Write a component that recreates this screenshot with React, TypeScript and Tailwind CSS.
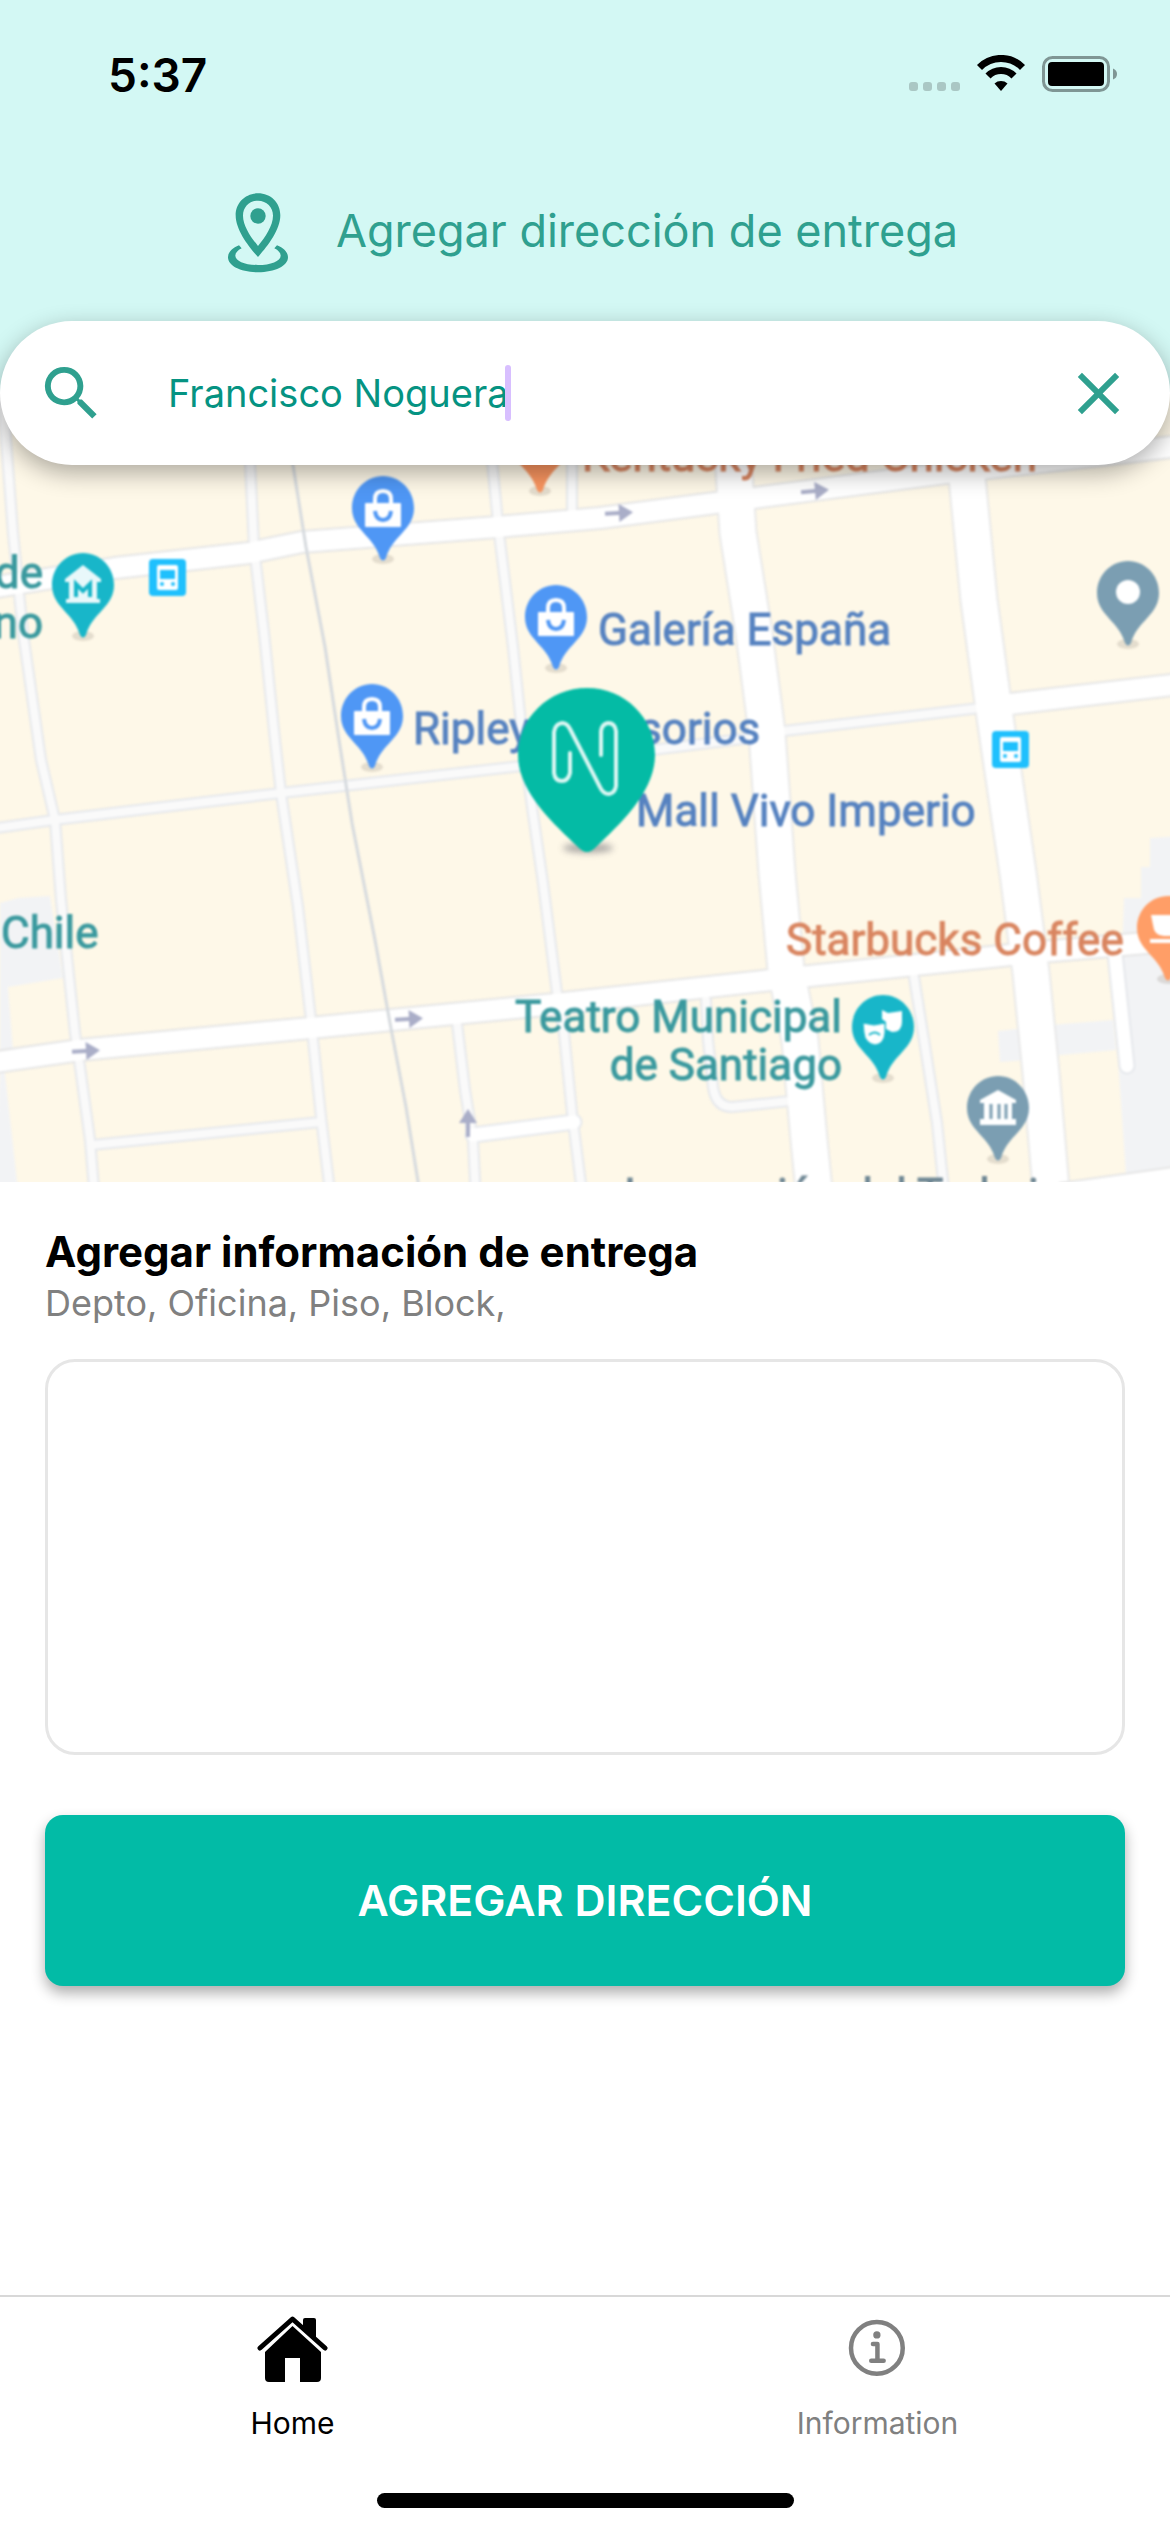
import { useState } from "react";
import type { ReactNode } from "react";
import { IoInformationCircleOutline } from "react-icons/io5";
import { MdClose, MdSearch } from "react-icons/md";

function StatusBar() {
  return (
    <div className="flex h-[150px] items-center justify-between pr-[50px] pl-[108px]">
      <span className="text-[46px] leading-none font-semibold text-black">5:37</span>
      <svg viewBox="0 0 212 40" className="h-10 w-[212px]" aria-hidden="true">
        {[0, 14, 28, 42].map((x) => (
          <rect key={x} x={x + 1} y="27" width="9" height="9" rx="3" fill="#aac7c4" />
        ))}
        <g fill="none" stroke="#000" strokeWidth="7">
          <path d="M71.500 12.500 A30 30 0 0 1 114.500 12.500" />
          <path d="M80 21 A18 18 0 0 1 106 21" />
        </g>
        <path d="M86.500 28.500 A10 10 0 0 1 99.500 28.500 L93 36 Z" fill="#000" />
        <rect x="135.500" y="2.500" width="65" height="33" rx="9" fill="none" stroke="#7f9694" strokeWidth="3" />
        <rect x="140" y="7" width="56" height="24" rx="4" fill="#000" />
        <path d="M205 13.500 Q209 15 209 19 Q209 23 205 24.500 Z" fill="#7f9694" />
      </svg>
    </div>
  );
}

function LocationIcon() {
  return (
    <svg viewBox="84 70 180 240" className="h-20 w-[60px]" fill="#2fa08f" aria-hidden="true">
      <path
        fillRule="evenodd"
        d="M174 71 C136 71 107 99 107 137 C107 182 147 232 174 262 C201 232 241 182 241 137 C241 99 212 71 174 71 Z M174 93 C200 93 219 112 219 138 C219 168 196 202 174 229 C152 202 129 168 129 138 C129 112 148 93 174 93 Z"
      />
      <circle cx="174" cy="139" r="23" />
      <path d="M117 227 C97 235 84 248 84 263 C84 289 123 308 174 308 C225 308 264 289 264 263 C264 248 251 235 231 227 L223 236 C235 242 242 250 242 258 C242 274 212 286 174 286 C136 286 106 274 106 258 C106 250 113 242 125 236 Z" />
    </svg>
  );
}

function HomeIcon() {
  return (
    <svg viewBox="0 -3 72 72" className="size-[72px]" aria-hidden="true">
      <path
        d="M35.500 10 L64 36 V62 Q64 66 60 66 H43 V42 H28 V66 H12 Q8 66 8 62 V36 Z"
        fill="#000"
      />
      <path d="M46 4 Q46 2 48 2 H57 Q59 2 59 4 V23 L46 11 Z" fill="#000" />
      <path
        d="M3 32 L35.500 3 L68 32"
        fill="none"
        stroke="#000"
        strokeWidth="5"
        strokeLinecap="round"
        strokeLinejoin="round"
      />
    </svg>
  );
}

function Pin({ x, y, color, children }: { x: number; y: number; color: string; children?: ReactNode }) {
  return (
    <g transform={`translate(${x} ${y})`}>
      <ellipse cx="0" cy="83" rx="11" ry="5" fill="#8a7f70" opacity="0.22" />
      <path d="M0 0 C-17 0 -31 14 -31 32 C-31 54 -9 60 -3 82 Q0 87 3 82 C9 60 31 54 31 32 C31 14 17 0 0 0 Z" fill={color} />
      {children}
    </g>
  );
}

function Bag() {
  return (
    <g>
      <rect x="-18" y="27" width="36" height="24" rx="1" fill="#fff" />
      <path d="M-8 28 V23 Q-8 15 0 15 Q8 15 8 23 V28" fill="none" stroke="#fff" strokeWidth="4" />
      <path d="M-8 35 Q-7 44 0 44 Q7 44 8 35" fill="none" stroke="#4f97f5" strokeWidth="4" />
    </g>
  );
}

function Transit({ x, y }: { x: number; y: number }) {
  return (
    <g transform={`translate(${x} ${y})`}>
      <rect width="37" height="37" rx="4" fill="#1fc0fd" />
      <rect x="8" y="6" width="21" height="25" rx="2" fill="#fff" />
      <rect x="11" y="11" width="15" height="9" fill="#1fc0fd" />
      <circle cx="13" cy="25" r="2" fill="#1fc0fd" />
      <circle cx="24" cy="25" r="2" fill="#1fc0fd" />
    </g>
  );
}

const minorRoads = [
  "M3 380 L6 440 L13 533 L23 633 L41 760 L55 820 L61 900 L75 1033 L80 1067 L90 1140 L95 1200",
  "M246 380 L249 440 L254 547 L264 633 L275 740 L281 793 L298 907 L311 1020 L321 1117 L331 1200",
  "M485 380 L490 440 L499 533 L513 647 L522 733 L532 807 L543 883 L557 993 L564 1033 L572 1113 L583 1200",
  "M572 380 L572 512",
  "M-10 829 L54 820 L281 793 L513 767 L750 738 L784 731 L980 708",
  "M92 1145 L321 1122",
  "M457 1023 L465 1090 L473 1140 L476 1200",
  "M706 1000 L708 1040 L713 1087 Q716 1107 732 1107 L790 1101",
  "M914 977 L924 1040 L937 1123 L945 1200",
];

const mediumRoads = ["M473 1135 L574 1122", "M1115 953 L1127 1066"];

const mainRoads = [
  "M-10 588 L115 568 L249 553 L302 542 L497 527 L600 518 L715 503 L953 472 L1180 446",
  "M-10 1063 L80 1050 L310 1028 L555 1004 L790 978 L1029 953 L1180 940",
  "M1010 704 L1180 684",
];

const avenues = [
  "M728 380 L732 440 L738 533 L754 633 L767 733 L777 873 L786 970 L800 1040 L809 1140 L815 1200",
  "M960 380 L966 467 L979 600 L995 717 L1018 873 L1031 973 L1041 1073 L1052 1200",
];

function Roads({ paths, color, width }: { paths: string[]; color: string; width: number }) {
  return (
    <g fill="none" strokeLinecap="round" strokeLinejoin="round">
      {paths.map((d) => (
        <path key={d} d={d} stroke={color} strokeWidth={width} />
      ))}
    </g>
  );
}

function Arrow({ x, y, angle }: { x: number; y: number; angle: number }) {
  return (
    <path
      transform={`translate(${x} ${y}) rotate(${angle})`}
      d="M-14 -2 H0 V-9 L14 0 L0 9 V2 H-14 Z"
      fill="#aaaec8"
    />
  );
}

function MapView() {
  return (
    <svg
      viewBox="0 392 1170 790"
      preserveAspectRatio="xMidYMid slice"
      className="block h-[790px] w-full bg-[#fef8e8]"
      role="img"
      aria-label="Mapa"
    >
      <g className="blur-[1px]">
        <g fill="#f2f3f5">
          <path d="M0 903 L18 898 L50 896 L63 978 L8 987 L13 1050 H0 Z" />
          <path d="M0 1070 L5 1074 L18 1190 H-5 Z" />
          <path d="M1150 838 L1180 836 V1190 H1127 L1118 1060 L1124 898 H1141 V867 H1150 Z" />
          <path d="M998 1031 L1025 1028 L1028 1060 L1000 1062 Z" />
          <path d="M1050 1025 L1113 1020 L1116 1050 L1050 1056 Z" />
        </g>
        <Roads paths={minorRoads} color="#e6e8ec" width={12} />
        <Roads paths={mediumRoads} color="#e6e8ec" width={17} />
        <Roads paths={mainRoads} color="#e6e6e6" width={24} />
        <Roads paths={avenues} color="#e9e9e9" width={39} />
        <Roads paths={minorRoads} color="#fafafa" width={8} />
        <Roads paths={mediumRoads} color="#ffffff" width={13} />
        <Roads paths={mainRoads} color="#ffffff" width={20} />
        <Roads paths={avenues} color="#ffffff" width={35} />
        <path d="M1060 1183 L1180 1166 V1195 H1060 Z" fill="#fff" stroke="#e6e6e6" strokeWidth="2" />
        <path
          d="M280 380 L289 440 L306 547 L325 647 L339 740 L352 823 L375 940 L390 1023 L406 1107 L421 1200"
          fill="none"
          stroke="#d6dade"
          strokeWidth="3"
        />
        <Arrow x={619} y={513} angle={-3} />
        <Arrow x={815} y={491} angle={-5} />
        <Arrow x={86} y={1051} angle={-3} />
        <Arrow x={409} y={1019} angle={-3} />
        <Arrow x={468} y={1123} angle={-90} />

        <g fontFamily="Roboto, sans-serif" fontSize="44" fontWeight="400" strokeWidth="1">
          <g fill="#5682c0" stroke="#5682c0">
            <text x="598" y="645">Galería España</text>
            <text x="413" y="744">Ripley Accesorios</text>
            <text x="636" y="826">Mall Vivo Imperio</text>
          </g>
          <g fill="#d98560" stroke="#d98560">
            <text x="786" y="955">Starbucks Coffee</text>
            <text x="582" y="471">Kentucky Fried Chicken</text>
          </g>
          <g fill="#3a999e" stroke="#3a999e">
            <text x="1" y="948">Chile</text>
            <text x="43" y="588" textAnchor="end">de</text>
            <text x="43" y="638" textAnchor="end">no</text>
            <text x="842" y="1032" textAnchor="end">Teatro Municipal</text>
            <text x="842" y="1080" textAnchor="end">de Santiago</text>
          </g>
          <text x="624" y="1210" fill="#6f8794" stroke="#6f8794">Inspección del Trabajo</text>
        </g>

        <Pin x={540} y={408} color="#fa9560" />
        <Pin x={383} y={476} color="#4f97f5"><Bag /></Pin>
        <Pin x={556} y={585} color="#4f97f5"><Bag /></Pin>
        <Pin x={372} y={684} color="#4f97f5"><Bag /></Pin>
        <Pin x={83} y={553} color="#18b6c9">
          <path d="M-18 26 L0 12 L18 26 V29 H14 V46 H17 V50 H-17 V46 H-14 V29 H-18 Z" fill="#fff" opacity="0.9" />
          <path d="M-7 44 V31 L0 38 L7 31 V44" fill="none" stroke="#18b6c9" strokeWidth="4" />
        </Pin>
        <Pin x={1128} y={561} color="#7b9eb2">
          <circle cx="0" cy="31" r="12" fill="#fff" />
        </Pin>
        <Pin x={1168} y={896} color="#ff9e67">
          <path d="M-17 19 H14 V28 Q14 40 2 40 H-4 Q-14 40 -15 29 Z M-18 43 H16 V47 H-18 Z" fill="#fff" />
        </Pin>
        <Pin x={883} y={995} color="#18b6c9">
          <path d="M-1 15 L5 18 L19 16 V27 Q19 37 9 37 L3 34 V27 L-1 24 Z" fill="#fff" />
          <path d="M-20 28 L-9 30 L2 28 V38 Q1 49 -8 50 Q-18 48 -19 38 Z" fill="#fff" stroke="#18b6c9" strokeWidth="1" />
          <path d="M-14 40 Q-8 35 -3 40" fill="none" stroke="#18b6c9" strokeWidth="2" />
        </Pin>
        <Pin x={998} y={1076} color="#7b9eb2">
          <path d="M-18 24 L0 14 L18 24 V27 H14 V43 H18 V49 H-18 V43 H-14 V27 H-18 Z" fill="#fff" />
          <path d="M-7 28 V43 M1 28 V43 M8 28 V43" stroke="#7b9eb2" strokeWidth="3" />
        </Pin>
        <Transit x={149} y={559} />
        <Transit x={992} y={731} />

        <ellipse cx="588" cy="848" rx="25" ry="5" fill="#5b5b66" opacity="0.5" className="blur-[3px]" />
        <path
          d="M587 688 C549 688 518 718 518 755 C518 792 554 824 578 847 Q587 857 596 847 C620 824 655 792 655 755 C655 718 625 688 587 688 Z"
          fill="#04bba5"
        />
        <path
          d="M570 753 V773 Q568 781 562 781 Q555 781 554 773 V732 Q555 724 562 723 Q567 723 570 729 L600 787 Q603 794 609 794 Q615 793 616 786 V731 Q615 723 608 723 Q602 724 601 731 V755"
          fill="none"
          stroke="#dcf7f3"
          strokeWidth="4"
          strokeLinecap="round"
        />
      </g>
    </svg>
  );
}

function SearchBar() {
  const [query, setQuery] = useState("Francisco Noguera");
  return (
    <div className="relative z-10 -mb-[73px] flex h-36 items-center rounded-full bg-white px-9 shadow-[0_8px_24px_rgba(0,0,0,0.32)]">
      <MdSearch className="size-[71px] text-[#2fa08f]" aria-hidden="true" />
      <div className="flex min-w-0 flex-1 items-center pl-[61px]">
        <input
          type="text"
          aria-label="Buscar dirección"
          value={query}
          onChange={(event) => setQuery(event.target.value)}
          className="field-sizing-content h-14 max-w-full bg-transparent text-[38px] text-[#059382] outline-none"
        />
        <span className="-ml-1 h-14 w-[6px] rounded-full bg-[#d8bfff]" />
      </div>
      <button type="button" aria-label="Borrar" onClick={() => setQuery("")}>
        <MdClose className="size-[71px] text-[#2fa08f]" />
      </button>
    </div>
  );
}

export default function App() {
  return (
    <div className="flex min-h-screen flex-col bg-white font-['Inter',sans-serif]">
      <header className="flex flex-col bg-[#d3f8f4]">
        <StatusBar />
        <div className="flex h-[171px] items-center justify-center gap-12 pb-[6px] pl-4">
          <LocationIcon />
          <h1 className="pb-1 text-[45px] leading-none text-[#2fa08f]">Agregar dirección de entrega</h1>
        </div>
        <SearchBar />
      </header>
      <MapView />

      <form className="flex flex-col px-[45px] pt-11" onSubmit={(event) => event.preventDefault()}>
        <label htmlFor="details" className="flex flex-col">
          <span className="text-[42px] leading-[52px] font-bold text-black">Agregar información de entrega</span>
          <span className="text-[36px] leading-[50px] text-[#808080]">Depto, Oficina, Piso, Block,</span>
        </label>
        <textarea
          id="details"
          className="mt-[31px] h-[396px] w-full resize-none rounded-[30px] border-3 border-[#e6e6e6] bg-white p-6 text-[36px] outline-none"
        />
        <button
          type="submit"
          className="mt-[60px] h-[171px] rounded-[18px] bg-[#02bba6] text-[43px] font-semibold text-white shadow-[0_7px_14px_rgba(0,0,0,0.32)]"
        >
          AGREGAR DIRECCIÓN
        </button>
      </form>

      <nav className="mt-auto border-t-2 border-[#d8d8d8]">
        <div className="grid grid-cols-2">
          <a href="#home" className="flex flex-col items-center pt-4 text-black">
            <HomeIcon />
            <span className="mt-[18px] text-[30px] leading-10">Home</span>
          </a>
          <a href="#information" className="flex flex-col items-center pt-4 text-[#808080]">
            <IoInformationCircleOutline className="size-[72px]" aria-hidden="true" />
            <span className="mt-[18px] text-[30px] leading-10">Information</span>
          </a>
        </div>
        <div className="mx-auto mt-[50px] mb-6 h-[15px] w-[417px] rounded-full bg-black" />
      </nav>
    </div>
  );
}
